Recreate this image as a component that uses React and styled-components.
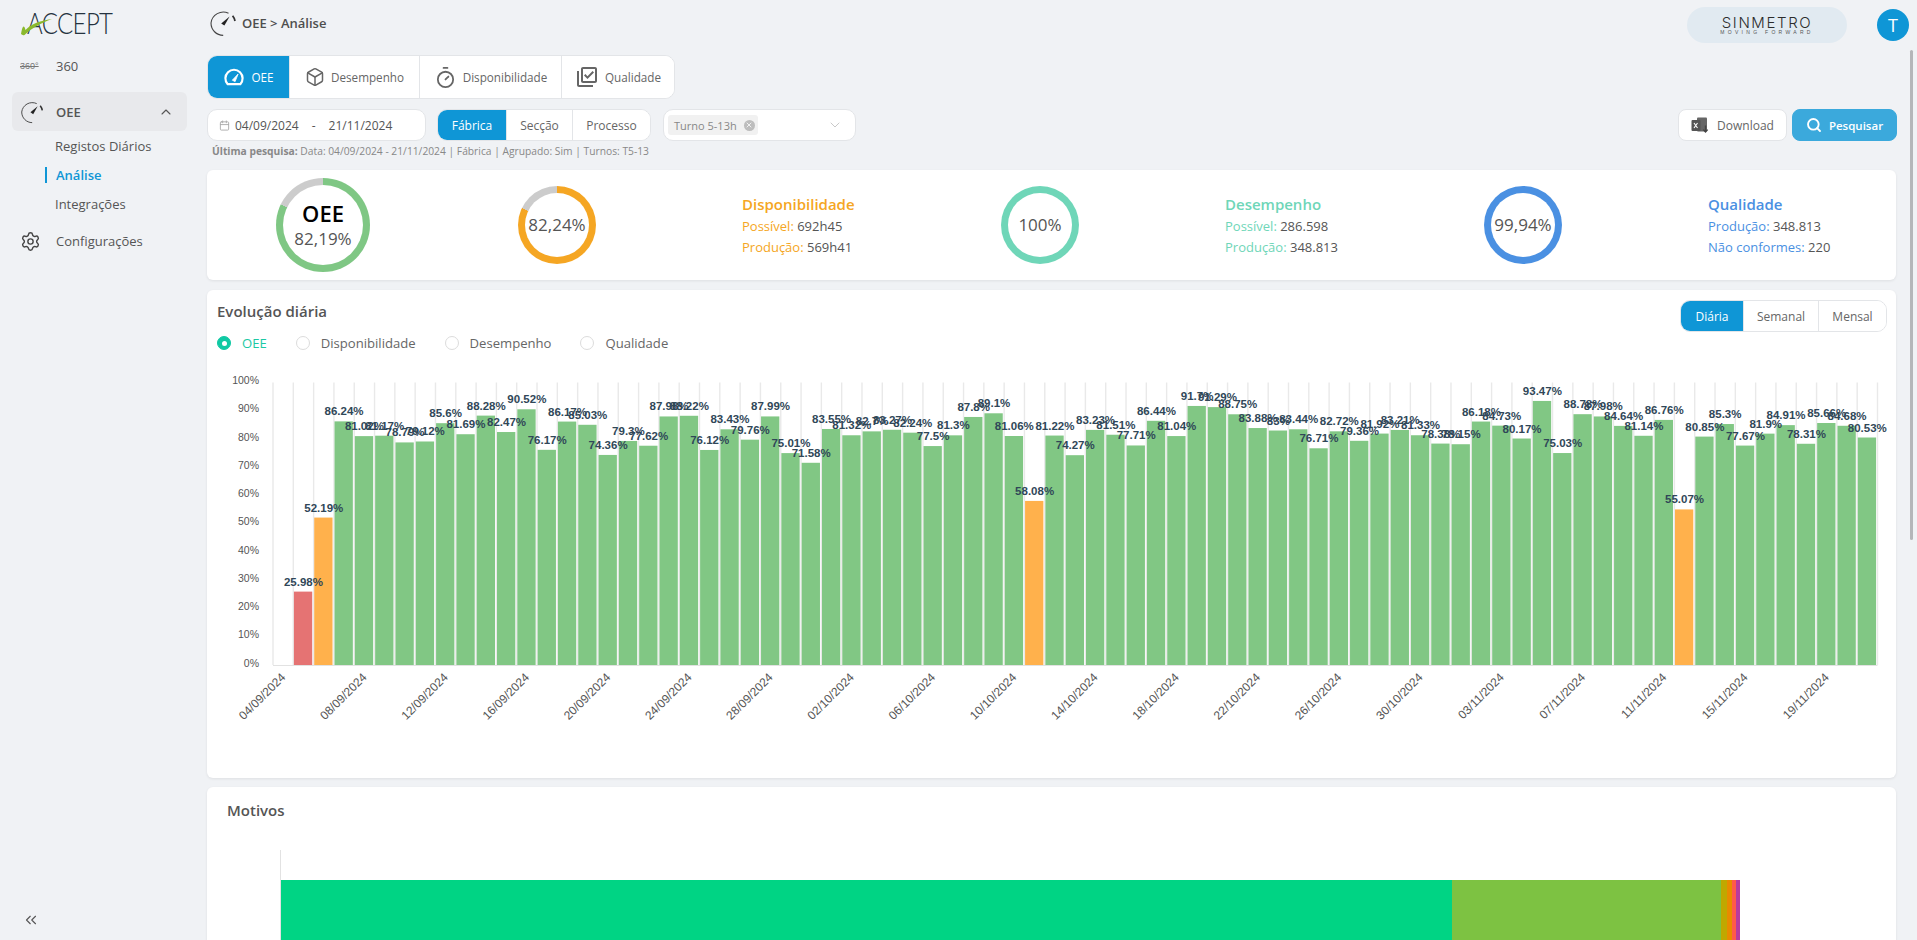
import React from 'react'
import styled, { createGlobalStyle } from 'styled-components'
import { Box, Calendar, ChevronDown, ChevronUp, ChevronsLeft, Search, Settings, Timer, X } from 'lucide-react'
import { MdOutlineLibraryAddCheck } from 'react-icons/md'

const GlobalStyle = createGlobalStyle`
  html, body { margin: 0; padding: 0; height: 100%; overflow: hidden; background: #f0f2f5; }
  body { font-family: "Open Sans", "Noto Sans", sans-serif; color: #555; }
  * { box-sizing: border-box; }
`

const BLUE = '#0f96d6'

const values = [
  null, 25.98, 52.19, 86.24, 81.02, 81.17, 78.79, 79.12, 85.6, 81.69, 88.28, 82.47, 90.52, 76.17, 86.17, 85.03,
  74.36, 79.3, 77.62, 87.98, 88.22, 76.12, 83.43, 79.76, 87.99, 75.01, 71.58, 83.55, 81.32, 82.7, 83.27, 82.24,
  77.5, 81.3, 87.8, 89.1, 81.06, 58.08, 81.22, 74.27, 83.23, 81.51, 77.71, 86.44, 81.04, 91.7, 91.29, 88.75,
  83.88, 83, 83.44, 76.71, 82.72, 79.36, 81.92, 83.21, 81.33, 78.38, 78.15, 86.18, 84.73, 80.17, 93.47, 75.03,
  88.78, 87.98, 84.64, 81.14, 86.76, 55.07, 80.85, 85.3, 77.67, 81.9, 84.91, 78.31, 85.66, 84.68, 80.53,
]

const motivos = [
  { color: '#00d484', width: 1171 },
  { color: '#7dc242', width: 269 },
  { color: '#c0a800', width: 6 },
  { color: '#e88b00', width: 5 },
  { color: '#ff5a4a', width: 4 },
  { color: '#b83aa0', width: 4 },
]

// layout ---------------------------------------------------------------------
const Page = styled.div`
  display: flex;
  height: 100vh;
  overflow: hidden;
  position: relative;
`
const Sidebar = styled.aside`
  width: 207px;
  flex: none;
  display: flex;
  flex-direction: column;
  position: relative;
`
const Main = styled.main`
  flex: 1;
  min-width: 0;
  padding-right: 21px;
  display: flex;
  flex-direction: column;
`
const ScrollThumb = styled.div`
  position: absolute;
  top: 50px;
  right: 4px;
  width: 3px;
  height: 490px;
  border-radius: 2px;
  background: #b4b6b9;
`

// sidebar --------------------------------------------------------------------
const LogoWrap = styled.div`
  height: 47px;
  padding: 3px 0 0 27px;
  position: relative;
  font-family: "Lato", sans-serif;
  font-weight: 300;
  font-size: 30px;
  line-height: 38px;
  letter-spacing: -0.8px;
  color: #25333f;
`
const LogoText = styled.span`
  display: inline-block;
  transform: scaleX(0.8);
  transform-origin: left center;
`
const LogoSwoosh = styled.svg`
  position: absolute;
  left: 19px;
  top: 14px;
`
const NavItem = styled.div`
  display: flex;
  align-items: center;
  height: ${(p) => p.$h || 39}px;
  margin: 0 20px ${(p) => p.$mb || 0}px 12px;
  padding: 0 13px 0 8px;
  border-radius: 6px;
  font-size: 13px;
  background: ${(p) => (p.$open ? '#e8e9ec' : 'transparent')};
  color: #555;
  font-weight: ${(p) => (p.$open ? 600 : 400)};
`
const NavIcon = styled.span`
  width: 36px;
  flex: none;
  display: flex;
  align-items: center;
`
const Tiny360 = styled.span`
  font-size: 9px;
  font-family: "Liberation Sans", sans-serif;
  color: #777;
  text-decoration: line-through;
`
const NavChevron = styled.span`
  margin-left: auto;
  display: flex;
`
const SubMenu = styled.div`
  display: flex;
  flex-direction: column;
  margin: 0 0 0 45px;
`
const SubItem = styled.div`
  height: 29px;
  display: flex;
  align-items: center;
  font-size: 13px;
  padding-left: ${(p) => (p.$active ? 8 : 10)}px;
  color: ${(p) => (p.$active ? BLUE : '#555')};
  font-weight: ${(p) => (p.$active ? 600 : 400)};
  &::before {
    content: '';
    display: ${(p) => (p.$active ? 'block' : 'none')};
    width: 2px;
    height: 16px;
    background: ${BLUE};
    margin: 0 9px 0 -8px;
  }
`
const Collapse = styled.div`
  margin-top: auto;
  padding: 0 0 11px 22px;
  color: #555;
  display: flex;
`

// header ---------------------------------------------------------------------
const Header = styled.header`
  height: 55px;
  flex: none;
  display: flex;
  align-items: flex-start;
  padding: 7px 0 0 2px;
  position: relative;
`
const Crumb = styled.div`
  display: flex;
  align-items: center;
  gap: 5px;
  height: 32px;
  font-size: 13px;
  font-weight: 600;
  color: #4e4e4e;
`
const HeaderRight = styled.div`
  margin-left: auto;
  display: flex;
  align-items: center;
  margin-right: -13px;
  gap: 30px;
`
const BrandPill = styled.div`
  width: 160px;
  height: 36px;
  border-radius: 18px;
  background: #e1eaf1;
  display: flex;
  flex-direction: column;
  align-items: center;
  justify-content: center;
  color: #2c2c2c;
`
const BrandName = styled.span`
  font-family: "Inter", sans-serif;
  font-weight: 300;
  font-size: 15px;
  line-height: 13px;
  letter-spacing: 1.6px;
`
const BrandSub = styled.span`
  font-family: "Liberation Sans", sans-serif;
  font-size: 5px;
  line-height: 6px;
  letter-spacing: 3.3px;
  color: #555;
`
const Avatar = styled.div`
  width: 32px;
  height: 32px;
  border-radius: 50%;
  background: ${BLUE};
  color: #fff;
  font-size: 18px;
  display: flex;
  align-items: center;
  justify-content: center;
`

// toolbar --------------------------------------------------------------------
const Group = styled.div`
  display: inline-flex;
  height: ${(p) => p.$h}px;
  margin-left: ${(p) => p.$ml || 0}px;
  border-radius: 10px;
  background: #fff;
  border: 1px solid #e3e5e8;
  overflow: hidden;
  flex: none;
`
const Segment = styled.div`
  display: flex;
  align-items: center;
  justify-content: center;
  gap: ${(p) => p.$gap || 6}px;
  width: ${(p) => p.$w}px;
  font-size: ${(p) => p.$fs || 12}px;
  color: ${(p) => (p.$active ? '#fff' : '#666')};
  background: ${(p) => (p.$active ? BLUE : '#fff')};
  & + & { border-left: 1px solid #e3e5e8; }
`
const TabsRow = styled.div`
  display: flex;
  flex: none;
`
const FilterRow = styled.div`
  display: flex;
  flex: none;
  align-items: center;
  margin-top: 10px;
  margin-right: -1px;
`
const DateBox = styled(Group)`
  width: 219px;
  align-items: center;
  padding-left: 11px;
  font-size: 12px;
  color: #555;
`
const DateText = styled.span`
  margin-left: ${(p) => p.$ml || 0}px;
`
const DateDash = styled.span`
  margin: 0 13px;
`
const SelectBox = styled(Group)`
  width: 193px;
  margin-left: 12px;
  align-items: center;
  padding: 0 12px 0 4px;
`
const Tag = styled.span`
  display: flex;
  align-items: center;
  gap: 7px;
  height: 20px;
  padding: 0 3px 0 6px;
  background: #f1f1f1;
  border-radius: 3px;
  font-size: 11px;
  color: #888;
`
const TagClose = styled.span`
  width: 11px;
  height: 11px;
  border-radius: 50%;
  background: #bdbdbd;
  display: flex;
  align-items: center;
  justify-content: center;
  color: #f1f1f1;
`
const ActionButton = styled.div`
  display: flex;
  align-items: center;
  justify-content: center;
  gap: 7px;
  height: 32px;
  width: ${(p) => p.$w}px;
  border-radius: 8px;
  font-size: ${(p) => (p.$primary ? 11.5 : 12)}px;
  margin-left: ${(p) => (p.$primary ? '5px' : 'auto')};
  color: ${(p) => (p.$primary ? '#fff' : '#666')};
  background: ${(p) => (p.$primary ? '#3ba9dc' : '#fff')};
  border: 1px solid ${(p) => (p.$primary ? '#3ba9dc' : '#e3e5e8')};
  font-weight: ${(p) => (p.$primary ? 600 : 400)};
`
const LastSearch = styled.div`
  height: 29px;
  flex: none;
  padding: 3px 0 0 5px;
  font-size: 10.27px;
  line-height: 14px;
  color: #888;
  b { font-weight: 700; }
`

// cards ----------------------------------------------------------------------
const Card = styled.section`
  flex: none;
  background: #fff;
  border-radius: 6px;
  box-shadow: 0 1px 3px rgba(0, 0, 0, 0.08);
  height: ${(p) => (p.$h ? `${p.$h}px` : 'auto')};
  margin-top: ${(p) => p.$mt || 0}px;
`
const KpiGrid = styled.div`
  display: grid;
  grid-template-columns: 232px repeat(3, 483px);
  height: 100%;
  align-items: center;
`
const KpiGroup = styled.div`
  display: grid;
  grid-template-columns: 236px 1fr;
  align-items: center;
`
const RingCell = styled.div`
  display: flex;
  justify-content: center;
`
const Ring = styled.div`
  width: ${(p) => p.$size}px;
  height: ${(p) => p.$size}px;
  border-radius: 50%;
  display: flex;
  align-items: center;
  justify-content: center;
  background: conic-gradient(${(p) => p.$color} ${(p) => p.$pct}%, #cccccc 0);
`
const RingInner = styled.div`
  width: ${(p) => p.$size - 14}px;
  height: ${(p) => p.$size - 14}px;
  border-radius: 50%;
  background: #fff;
  display: flex;
  flex-direction: column;
  align-items: center;
  justify-content: center;
`
const RingTitle = styled.span`
  font-size: 22px;
  line-height: 28px;
  font-weight: 600;
  color: #000;
`
const RingValue = styled.span`
  font-size: 17px;
  line-height: 24px;
  color: #555;
`
const KpiText = styled.div`
  padding-left: 67px;
  color: ${(p) => p.$color};
  font-size: 13px;
  line-height: 21px;
`
const KpiTitle = styled.div`
  font-size: 15px;
  font-weight: 600;
  line-height: 23px;
`
const KpiValue = styled.span`
  color: #555;
`
const ChartHead = styled.div`
  height: 70px;
  padding: 10px 9px 0 10px;
  display: grid;
  grid-template-columns: 1fr auto;
  align-content: start;
`
const CardTitle = styled.h3`
  margin: ${(p) => p.$mt || 0}px 0 0;
  font-size: 15px;
  line-height: 26px;
  font-weight: 600;
  color: #555;
`
const RadioRow = styled.div`
  display: flex;
  gap: 29px;
  margin-top: 1px;
  grid-column: 1 / 3;
`
const RadioItem = styled.label`
  display: flex;
  align-items: center;
  gap: 11px;
  font-size: 13.1px;
  line-height: 20px;
  color: ${(p) => (p.$on ? '#1cc8a4' : '#666')};
`
const RadioDot = styled.span`
  width: 14px;
  height: 14px;
  border-radius: 50%;
  background: ${(p) => (p.$on ? '#10c9a4' : '#fff')};
  border: 1px solid ${(p) => (p.$on ? '#10c9a4' : '#dcdcdc')};
  display: flex;
  align-items: center;
  justify-content: center;
  &::after {
    content: '';
    display: ${(p) => (p.$on ? 'block' : 'none')};
    width: 5px;
    height: 5px;
    border-radius: 50%;
    background: #fff;
  }
`
const MotivosTitle = styled(CardTitle)`
  padding: 10px 0 0 20px;
`
const MotivosPlot = styled.div`
  margin: 27px 0 0 73px;
  padding-top: 30px;
  border-left: 1px solid #e2e2e2;
`
const StackBar = styled.div`
  display: flex;
  height: 200px;
`
const StackPart = styled.div`
  width: ${(p) => p.$w}px;
  background: ${(p) => p.$color};
  flex: none;
`

// drawings -------------------------------------------------------------------
const ChartSvg = styled.svg`
  display: block;
  font-family: "Liberation Sans", Arial, sans-serif;
`

function GaugeIcon({ size = 24 }) {
  return (
    <svg width={size} height={size} viewBox="0 0 28 28" fill="none">
      <path d="M19.5 4.2A12.4 12.4 0 0 0 2 14c0 6.8 5.4 12.4 12.2 12.4" stroke="#444" strokeWidth="1.1" />
      <path d="M26 12A12 12 0 0 0 23.6 6.8" stroke="#333" strokeWidth="1.8" />
      <path d="M12.2 14.4 20.6 7.4 15.4 16.6Z" fill="#222" />
    </svg>
  )
}

function OeeTabIcon() {
  return (
    <svg width="22" height="18" viewBox="0 0 21 18" fill="none">
      <path d="M4.2 16.2A8.6 8.6 0 1 1 16.8 16.2Z" stroke="#fff" strokeWidth="2.2" strokeLinejoin="round" />
      <path d="M8.8 12.2 14.6 6 11.6 13.6Z" fill="#fff" stroke="#fff" strokeWidth="0.8" strokeLinejoin="round" />
    </svg>
  )
}

function ExcelIcon() {
  return (
    <svg width="19" height="17" viewBox="0 0 19 17" fill="none">
      <rect x="6" y="0.5" width="10" height="14" rx="1" fill="#666" />
      <rect x="0.5" y="3" width="9" height="11" rx="1" fill="#555" />
      <path d="M3 6l3.5 5M6.5 6 3 11" stroke="#fff" strokeWidth="1.1" />
      <path d="M14.5 8.5v6M12.3 12.6l2.2 2.4 2.2-2.4" stroke="#444" strokeWidth="1.4" fill="none" />
    </svg>
  )
}

function Gauge({ size, pct, color, value, title }) {
  return (
    <Ring $size={size} $pct={pct} $color={color}>
      <RingInner $size={size}>
        {title && <RingTitle>{title}</RingTitle>}
        <RingValue>{value}</RingValue>
      </RingInner>
    </Ring>
  )
}

function Kpi({ pct, color, value, title, rows }) {
  return (
    <KpiGroup>
      <RingCell>
        <Gauge size={78} pct={pct} color={color} value={value} />
      </RingCell>
      <KpiText $color={color}>
        <KpiTitle>{title}</KpiTitle>
        {rows.map(([label, val]) => (
          <div key={label}>
            {label}: <KpiValue>{val}</KpiValue>
          </div>
        ))}
      </KpiText>
    </KpiGroup>
  )
}

function barColor(v) {
  if (v < 50) return '#e57373'
  if (v < 60) return '#ffb14c'
  return '#81c784'
}

function dateLabel(i) {
  const d = new Date(Date.UTC(2024, 8, 4 + i))
  const dd = String(d.getUTCDate()).padStart(2, '0')
  const mm = String(d.getUTCMonth() + 1).padStart(2, '0')
  return `${dd}/${mm}/${d.getUTCFullYear()}`
}

// svg origin is the card's left edge and y=360 of the page
function DailyChart() {
  const x0 = 66
  const slot = 20.31
  const y0 = 305
  const y100 = 22.5
  const yOf = (v) => y0 - ((y0 - y100) * v) / 100
  return (
    <ChartSvg width="1689" height="418" viewBox="0 0 1689 418">
      {values.map((_, i) => (
        <line key={i} x1={x0 + slot * i} x2={x0 + slot * i} y1={y100} y2={y0} stroke="#e9e9e9" strokeWidth="1.4" />
      ))}
      <line x1={x0 + slot * 79} x2={x0 + slot * 79} y1={y100} y2={y0} stroke="#e9e9e9" strokeWidth="1.4" />
      {[0, 10, 20, 30, 40, 50, 60, 70, 80, 90, 100].map((t) => (
        <text key={t} x="52" y={yOf(t) + 1.5} textAnchor="end" fontSize="10.5" fill="#555">
          {t}%
        </text>
      ))}
      {values.map((v, i) =>
        v === null ? null : (
          <rect key={i} x={x0 + slot * i + 0.6} y={yOf(v)} width={slot - 2} height={y0 - yOf(v)} fill={barColor(v)} />
        )
      )}
      <line x1={x0} x2={x0 + slot * 79} y1={y0 + 0.5} y2={y0 + 0.5} stroke="#e2e2e2" />
      {values.map((v, i) =>
        v === null ? null : (
          <text
            key={i}
            x={x0 + slot * (i + 0.5)}
            y={yOf(v) - 6}
            textAnchor="middle"
            fontSize="11.5"
            fontWeight="700"
            fill="#304758"
          >
            {v}%
          </text>
        )
      )}
      {values.map((_, i) =>
        i % 4 === 0 ? (
          <text
            key={i}
            x={x0 + slot * (i + 0.5) + 3}
            y={y0 + 13}
            textAnchor="end"
            fontSize="12"
            fill="#555"
            transform={`rotate(-45 ${x0 + slot * (i + 0.5) + 3} ${y0 + 13})`}
          >
            {dateLabel(i)}
          </text>
        ) : null
      )}
    </ChartSvg>
  )
}

export default function App() {
  return (
    <>
      <GlobalStyle />
      <Page>
        <Sidebar>
          <LogoWrap>
            <LogoText>ACCEPT</LogoText>
            <LogoSwoosh width="34" height="22" viewBox="0 0 34 22" fill="none">
              <path d="M2 20C3 15 3.5 13 4.5 12.5C6 13 6 15 6.5 16C12 10 20 7 33 5C22 9 13 14 5.5 21C4 21.5 3 21 2 20Z" fill="#8ab92d" />
            </LogoSwoosh>
          </LogoWrap>
          <NavItem $h={38} $mb={7}>
            <NavIcon><Tiny360>360°</Tiny360></NavIcon>
            360
          </NavItem>
          <NavItem $open $h={39}>
            <NavIcon><GaugeIcon /></NavIcon>
            OEE
            <NavChevron><ChevronUp size={16} strokeWidth={1.6} /></NavChevron>
          </NavItem>
          <SubMenu>
            <SubItem>Registos Diários</SubItem>
            <SubItem $active>Análise</SubItem>
            <SubItem>Integrações</SubItem>
          </SubMenu>
          <NavItem $h={46}>
            <NavIcon><Settings size={21} strokeWidth={1.6} color="#444" /></NavIcon>
            Configurações
          </NavItem>
          <Collapse><ChevronsLeft size={18} strokeWidth={1.5} /></Collapse>
        </Sidebar>

        <Main>
          <Header>
            <Crumb>
              <GaugeIcon size={28} />
              <span>OEE &gt; Análise</span>
            </Crumb>
            <HeaderRight>
              <BrandPill>
                <BrandName>SINMETRO</BrandName>
                <BrandSub>MOVING FORWARD</BrandSub>
              </BrandPill>
              <Avatar>T</Avatar>
            </HeaderRight>
          </Header>

          <TabsRow>
            <Group $h={44}>
              <Segment $active $w={81} $fs={11.7}><OeeTabIcon />OEE</Segment>
              <Segment $w={130} $fs={11.7}><Box size={20} strokeWidth={1.8} />Desempenho</Segment>
              <Segment $w={142} $fs={11.7}><Timer size={23} strokeWidth={1.9} />Disponibilidade</Segment>
              <Segment $w={113} $fs={11.7}><MdOutlineLibraryAddCheck size={24} />Qualidade</Segment>
            </Group>
          </TabsRow>

          <FilterRow>
            <DateBox $h={32}>
              <Calendar size={11} color="#aaa" />
              <DateText $ml={5}>04/09/2024</DateText>
              <DateDash>-</DateDash>
              <DateText>21/11/2024</DateText>
            </DateBox>
            <Group $h={32} $ml={11}>
              <Segment $active $w={68}>Fábrica</Segment>
              <Segment $w={66}>Secção</Segment>
              <Segment $w={78}>Processo</Segment>
            </Group>
            <SelectBox $h={32}>
              <Tag>
                Turno 5-13h
                <TagClose><X size={8} strokeWidth={3} /></TagClose>
              </Tag>
              <NavChevron><ChevronDown size={16} strokeWidth={1.2} color="#bbb" /></NavChevron>
            </SelectBox>
            <ActionButton $w={109}><ExcelIcon />Download</ActionButton>
            <ActionButton $primary $w={105}><Search size={16} strokeWidth={2.8} />Pesquisar</ActionButton>
          </FilterRow>

          <LastSearch>
            <b>Última pesquisa:</b> Data: 04/09/2024 - 21/11/2024 | Fábrica | Agrupado: Sim | Turnos: T5-13
          </LastSearch>

          <Card $h={110}>
            <KpiGrid>
              <RingCell>
                <Gauge size={94} pct={82.19} color="#7fc784" value="82,19%" title="OEE" />
              </RingCell>
              <Kpi
                pct={82.24}
                color="#f5a623"
                value="82,24%"
                title="Disponibilidade"
                rows={[['Possível', '692h45'], ['Produção', '569h41']]}
              />
              <Kpi
                pct={100}
                color="#6fd6b8"
                value="100%"
                title="Desempenho"
                rows={[['Possível', '286.598'], ['Produção', '348.813']]}
              />
              <Kpi
                pct={99.94}
                color="#4a90e2"
                value="99,94%"
                title="Qualidade"
                rows={[['Produção', '348.813'], ['Não conformes', '220']]}
              />
            </KpiGrid>
          </Card>

          <Card $h={488} $mt={10}>
            <ChartHead>
              <CardTitle $mt={-2}>Evolução diária</CardTitle>
              <Group $h={32}>
                <Segment $active $w={62}>Diária</Segment>
                <Segment $w={75}>Semanal</Segment>
                <Segment $w={68}>Mensal</Segment>
              </Group>
              <RadioRow>
                <RadioItem $on><RadioDot $on />OEE</RadioItem>
                <RadioItem><RadioDot />Disponibilidade</RadioItem>
                <RadioItem><RadioDot />Desempenho</RadioItem>
                <RadioItem><RadioDot />Qualidade</RadioItem>
              </RadioRow>
            </ChartHead>
            <DailyChart />
          </Card>

          <Card $mt={9}>
            <MotivosTitle>Motivos</MotivosTitle>
            <MotivosPlot>
              <StackBar>
                {motivos.map((m) => (
                  <StackPart key={m.color} $w={m.width} $color={m.color} />
                ))}
              </StackBar>
            </MotivosPlot>
          </Card>
        </Main>
        <ScrollThumb />
      </Page>
    </>
  )
}
